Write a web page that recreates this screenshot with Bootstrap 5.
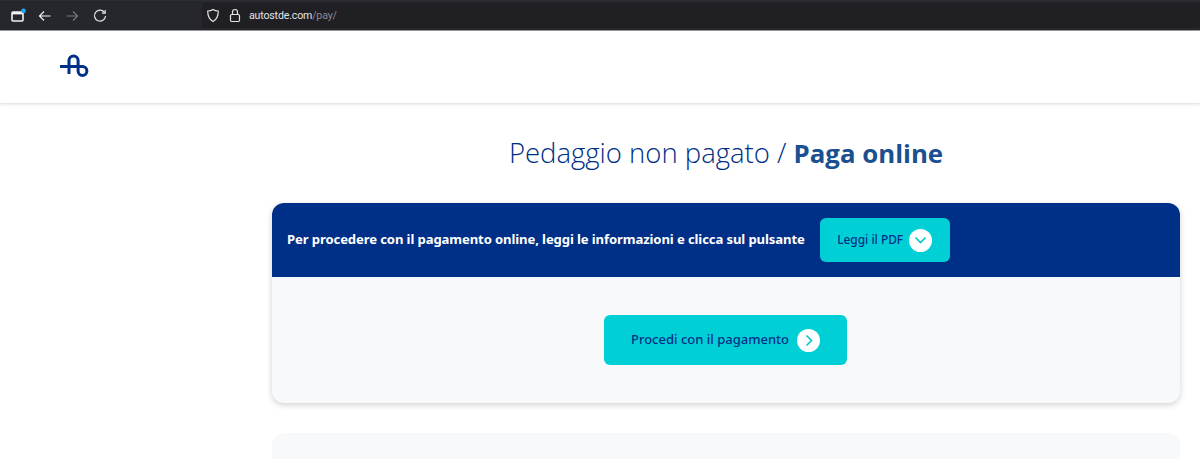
<!DOCTYPE html>
<html lang="it">
<head>
<meta charset="utf-8">
<title>Pedaggio non pagato</title>
<link href="https://cdn.jsdelivr.net/npm/bootstrap@5.3.0/dist/css/bootstrap.min.css" rel="stylesheet">
<style>
html,body{height:459px;overflow:hidden;background:#fff;font-family:"Noto Sans",sans-serif}
.chrome-bar{height:31px;background:#26262d;border-top:1px solid #2d2d35;border-bottom:1px solid #9a9a9e;padding-left:11px}
.chrome-icon{display:block;flex:none}
.ico-back{margin-left:11px}
.ico-fwd{margin-left:13px}
.ico-reload{margin-left:14px}
.url-box{margin-left:95px;flex:1;height:25px;background:#1f1f24;border-radius:4px 0 0 4px;padding-left:4px;color:#e3e3e6;font-size:10.6px;letter-spacing:-.17px;font-family:"Roboto",sans-serif}
.ico-lock{margin-left:8px}
.url-text{margin-left:7px}
.url-path{color:#8a8a90}
.site-head{height:72px;box-shadow:0 1px 3px rgba(0,0,0,.16);padding-left:59px}
.logo-mark{margin-bottom:5px}
.page-main{padding-left:272px;padding-right:20px;overflow:hidden;height:356px}
.page-title{color:#002f87;font-size:27.5px;font-weight:300;font-family:"Open Sans",sans-serif;line-height:38px;margin:31px 0 31px}
.page-title b{color:#1a5090;font-weight:700;font-size:25.8px}
.pay-card{background:#f8f9fb;border-radius:12px;height:200px;box-shadow:0 2px 6px rgba(0,0,0,.18);overflow:hidden;border:0}
.pay-head{height:74px;background:#002f87;padding-left:15px;color:#fff;font-weight:700;font-size:13.1px;letter-spacing:-.11px}
.btn-teal{background:#00d0d5;color:#002f87;border:0;border-radius:6px;font-weight:500;letter-spacing:0;display:flex;align-items:center;justify-content:center}
.btn-teal:hover{background:#00d0d5;color:#002f87}
.btn-pdf{width:130px;height:44px;margin-left:15px;font-size:11.9px;gap:6px}
.btn-pay{width:243px;height:50px;font-size:13px;gap:8px;margin:38px 1px 0 0}
.circle-ico{width:23px;height:23px;border-radius:50%;background:#fff;display:flex;align-items:center;justify-content:center;flex:none}
.next-card{background:#f8f9fb;border-radius:12px;height:60px;margin-top:30px}
</style>
</head>
<body>
<div class="chrome-bar d-flex align-items-center">
  <svg class="chrome-icon" width="16" height="16" viewBox="0 0 16 16"><rect x="1" y="4" width="11" height="9" rx="1" fill="none" stroke="#f2f2f2" stroke-width="1.6"/><rect x="1" y="4" width="11" height="2.4" fill="#f2f2f2"/><circle cx="12.5" cy="2.8" r="2.400" fill="#1ea7f5"/></svg>
  <svg class="chrome-icon ico-back" width="14" height="14" viewBox="0 0 14 14" fill="none" stroke="#f0f0f0" stroke-width="1.2"><path d="M12.5 7H1.5M6 2.5 1.5 7 6 11.500"/></svg>
  <svg class="chrome-icon ico-fwd" width="14" height="14" viewBox="0 0 14 14" fill="none" stroke="#77777c" stroke-width="1.2"><path d="M1.500 7h11M8 2.500 12.500 7 8 11.500"/></svg>
  <svg class="chrome-icon ico-reload" width="14" height="14" viewBox="0 0 14 14" fill="none" stroke="#e6e6e6" stroke-width="1.2"><path d="M11.700 3.800A5.500 5.500 0 1 0 12.500 7"/><path d="M12.200 1v3.200H9"/></svg>
  <div class="url-box d-flex align-items-center">
    <svg class="chrome-icon" width="14" height="15" viewBox="0 0 14 15" fill="none" stroke="#e3e3e6" stroke-width="1.200"><path d="M7 1.500c1.500 1 3.500 1.500 5.300 1.500 0 5-1.500 8.500-5.300 10.500C3.200 11.500 1.700 8 1.700 3 3.500 3 5.500 2.500 7 1.500z"/></svg>
    <svg class="chrome-icon ico-lock" width="14" height="15" viewBox="0 0 14 15" fill="none" stroke="#e3e3e6" stroke-width="1.200"><rect x="2.500" y="6.500" width="9" height="7" rx="1.200"/><path d="M4.500 6.500V4a2.500 2.500 0 0 1 5 0v2.500"/></svg>
    <span class="url-text">autostde.com<span class="url-path">/pay/</span></span>
  </div>
</div>
<header class="site-head d-flex align-items-center">
  <svg class="logo-mark" width="30" height="24" viewBox="0 0 30 24" fill="none" stroke="#002f87" stroke-width="3"><path d="M1 13.600H23.500A4.400 4.400 0 1 1 19.100 18V7.500A4.550 4.550 0 0 0 10 7.500V21"/></svg>
</header>
<main class="page-main">
  <h1 class="page-title text-center">Pedaggio non pagato / <b>Paga online</b></h1>
  <section class="card pay-card">
    <div class="pay-head d-flex align-items-center">
      <span>Per procedere con il pagamento online, leggi le informazioni e clicca sul pulsante</span>
      <a class="btn btn-teal btn-pdf" href="#">Leggi il PDF
        <span class="circle-ico"><svg width="13" height="8" viewBox="0 0 13 8" fill="none" stroke="#00c8ce" stroke-width="1.600"><path d="M1.500 1.500 6.500 6.500 11.500 1.500"/></svg></span>
      </a>
    </div>
    <div class="d-flex justify-content-center">
      <a class="btn btn-teal btn-pay" href="#">Procedi con il pagamento
        <span class="circle-ico"><svg width="8" height="13" viewBox="0 0 8 13" fill="none" stroke="#00c8ce" stroke-width="1.600"><path d="M1.500 1.500 6.500 6.500 1.500 11.500"/></svg></span>
      </a>
    </div>
  </section>
  <div class="next-card"></div>
</main>
<script src="https://cdn.jsdelivr.net/npm/bootstrap@5.3.0/dist/js/bootstrap.bundle.min.js"></script>
</body>
</html>
